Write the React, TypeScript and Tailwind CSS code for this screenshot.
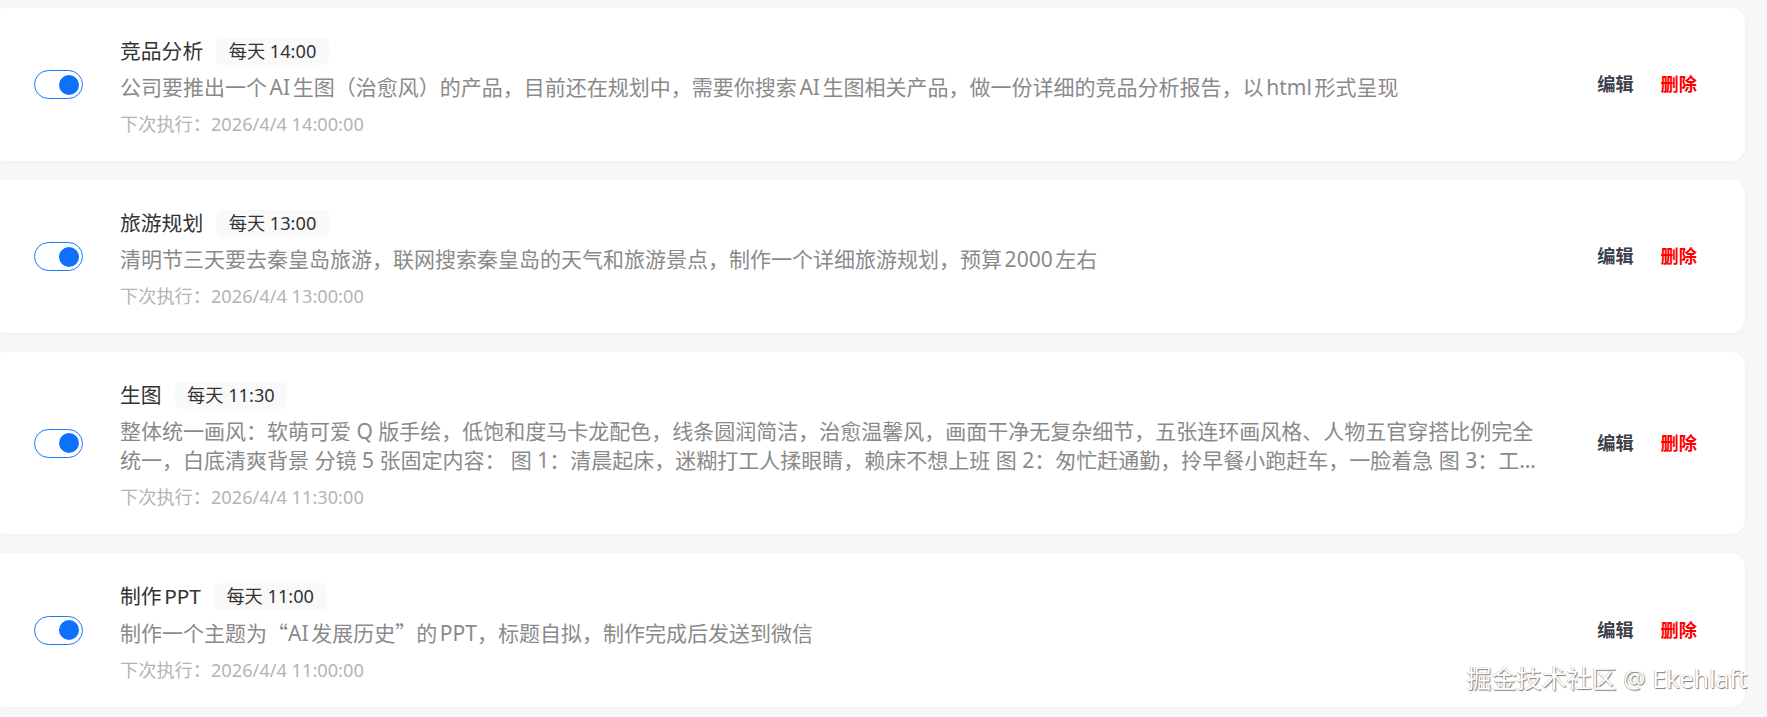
import React from "react";

type Task = {
  title: string;
  schedule: string;
  desc: React.ReactNode;
  next: string;
};

const Q = ({ children }: { children: React.ReactNode }) => (
  <span className="font-['Noto_Sans_CJK_SC',sans-serif]">{children}</span>
);

const tasks: Task[] = [
  {
    title: "竞品分析",
    schedule: "每天 14:00",
    desc: "公司要推出一个AI生图（治愈风）的产品，目前还在规划中，需要你搜索AI生图相关产品，做一份详细的竞品分析报告，以html形式呈现",
    next: "下次执行：2026/4/4 14:00:00",
  },
  {
    title: "旅游规划",
    schedule: "每天 13:00",
    desc: "清明节三天要去秦皇岛旅游，联网搜索秦皇岛的天气和旅游景点，制作一个详细旅游规划，预算2000左右",
    next: "下次执行：2026/4/4 13:00:00",
  },
  {
    title: "生图",
    schedule: "每天 11:30",
    desc: "整体统一画风：软萌可爱 Q 版手绘，低饱和度马卡龙配色，线条圆润简洁，治愈温馨风，画面干净无复杂细节，五张连环画风格、人物五官穿搭比例完全统一，白底清爽背景 分镜 5 张固定内容： 图 1：清晨起床，迷糊打工人揉眼睛，赖床不想上班 图 2：匆忙赶通勤，拎早餐小跑赶车，一脸着急 图 3：工位上埋头苦干，电脑屏幕堆满待办，疲惫叹气 图 4：午休时间，趴在桌上小憩，梦见假期 图 5：下班打卡，开心奔跑回家",
    next: "下次执行：2026/4/4 11:30:00",
  },
  {
    title: "制作PPT",
    schedule: "每天 11:00",
    desc: (
      <>
        制作一个主题为<Q>“</Q>AI发展历史<Q>”</Q>的PPT，标题自拟，制作完成后发送到微信
      </>
    ),
    next: "下次执行：2026/4/4 11:00:00",
  },
];

function Toggle() {
  return (
    <div className="flex h-[29px] w-[49px] shrink-0 items-center justify-end rounded-full border border-[#1677ff] bg-white pr-[3px]">
      <div className="h-[20px] w-[20px] rounded-full bg-[#0f6fff]" />
    </div>
  );
}

function TaskCard({ task }: { task: Task }) {
  return (
    <div className="flex items-center rounded-l-[4px] rounded-r-[14px] bg-white pl-[34px] pr-[48px] shadow-[0_1px_4px_rgba(0,0,0,0.035)]">
      <Toggle />
      <div className="ml-[37px] min-w-0 flex-1 pt-[30px] pb-[24.5px]">
        <div className="flex h-[27px] items-center">
          <span className="text-[20.8px] leading-[27px] text-[#333333]">{task.title}</span>
          <span className="ml-[13px] flex h-[27px] items-center rounded-[6px] bg-[#f9f9fa] px-[12.5px] text-[18.2px] leading-[27px] text-[#333333]">
            {task.schedule}
          </span>
        </div>
        <p className="mt-[7.5px] line-clamp-2 text-[21px] leading-[29px] text-[#8a8a8a]">{task.desc}</p>
        <div className="mt-[10px] text-[18.2px] leading-[25px] text-[#b4b4b4]">{task.next}</div>
      </div>
      <div className="ml-[52px] flex shrink-0 items-center gap-[27px] text-[18.2px] font-bold leading-[25px]">
        <button className="text-[#3b3f4a]">编辑</button>
        <button className="text-[#ff0000]">删除</button>
      </div>
    </div>
  );
}

export default function App() {
  return (
    <div className="relative min-h-screen w-full bg-[#f7f7f7] pt-[8px] pr-[22px] font-['Noto_Sans','Noto_Sans_CJK_SC',sans-serif] [text-autospace:normal]">
      <div className="flex flex-col gap-[19px]">
        {tasks.map((t) => (
          <TaskCard key={t.title} task={t} />
        ))}
      </div>
      <div className="pointer-events-none absolute right-[20px] top-[662px] text-[25px] leading-[32px] text-white [text-shadow:1px_1px_1px_rgba(0,0,0,0.5),-0.5px_-0.5px_0.5px_rgba(0,0,0,0.35)]">
        掘金技术社区 @ Ekehlaft
      </div>
    </div>
  );
}
